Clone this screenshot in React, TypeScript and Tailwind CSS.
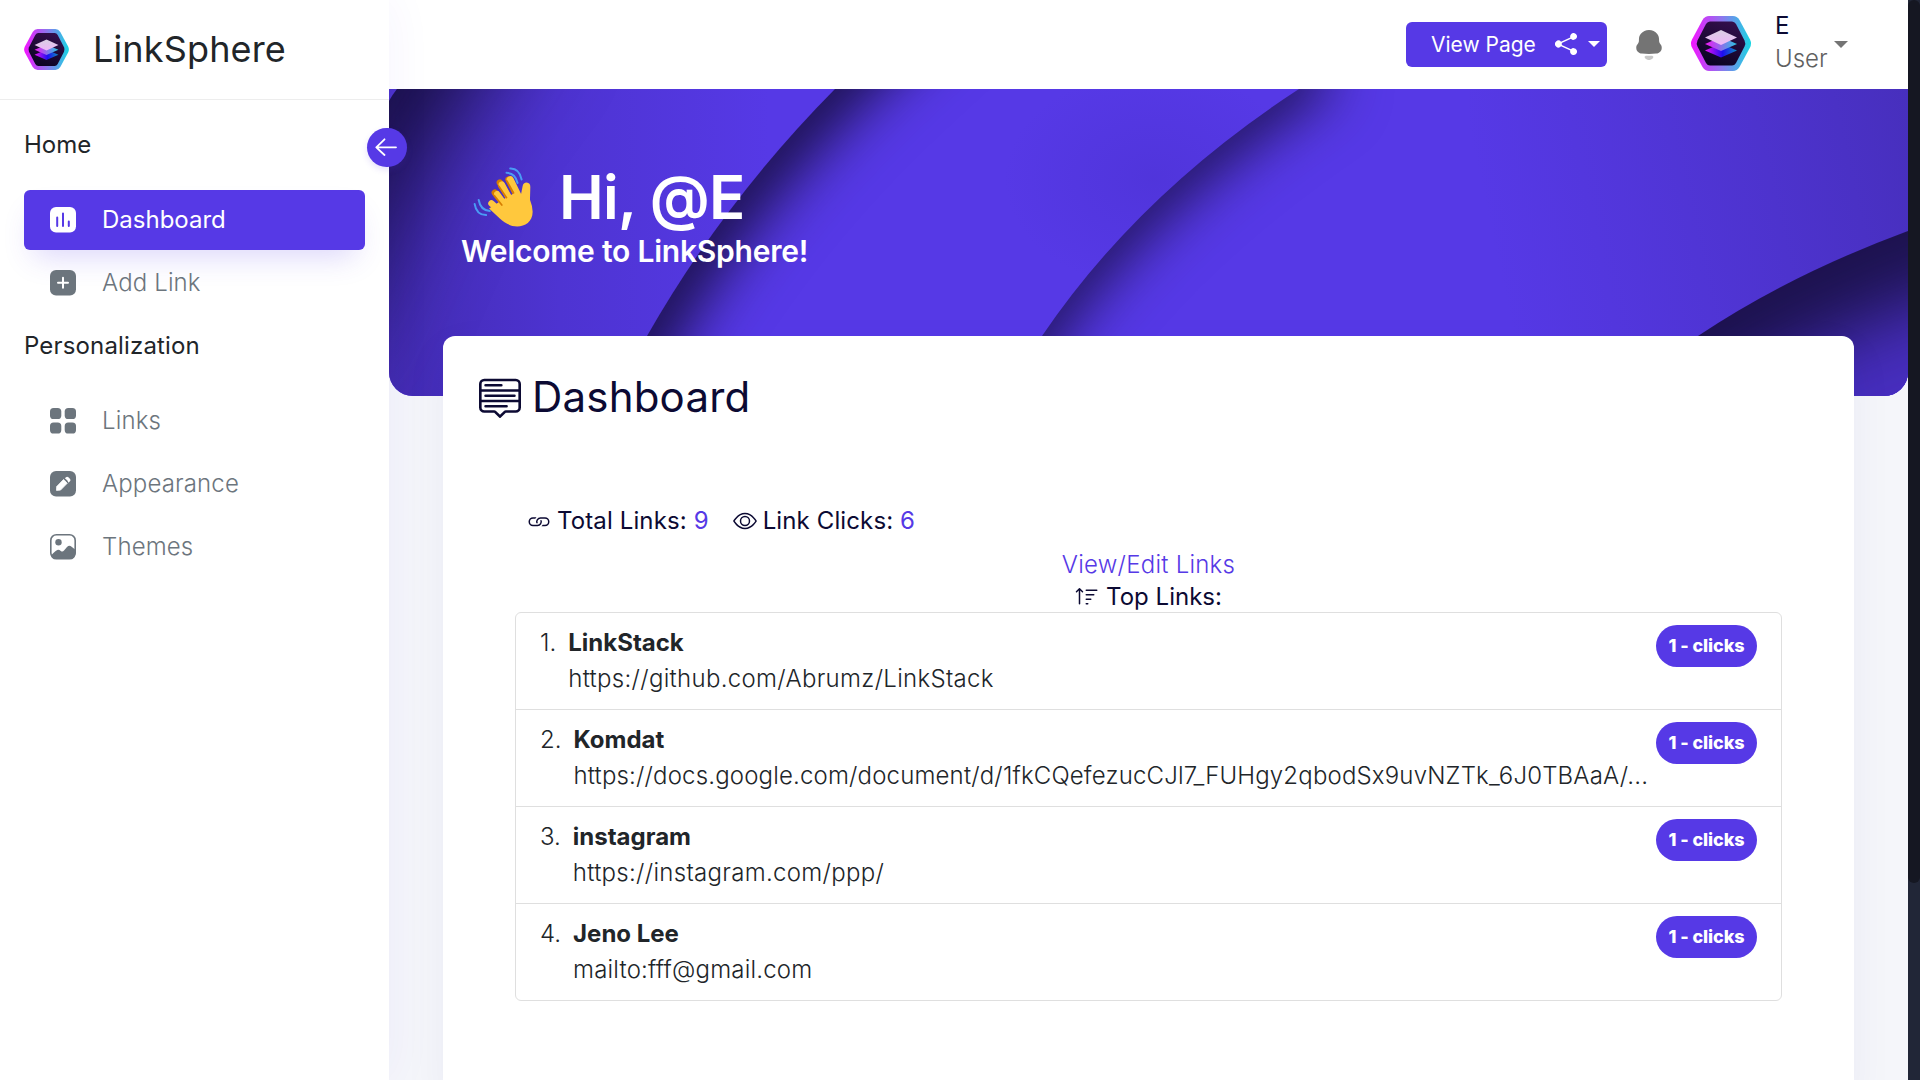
import React, { useId } from "react";
import { BsEye, BsLink, BsMenuUp, BsShareFill, BsSortUp } from "react-icons/bs";

const LINKS = [
  { name: "LinkStack", url: "https://github.com/Abrumz/LinkStack", tracking: "tracking-[0.31px]" },
  { name: "Komdat", url: "https://docs.google.com/document/d/1fkCQefezucCJl7_FUHgy2qbodSx9uvNZTk_6J0TBAaA/...", tracking: "tracking-[0.165px]" },
  { name: "instagram", url: "https://instagram.com/ppp/", tracking: "tracking-[0.3px]" },
  { name: "Jeno Lee", url: "mailto:fff@gmail.com", tracking: "tracking-[0.18px]" },
];

function Logo({ className }: { className: string }) {
  const id = useId();
  return (
    <svg viewBox="0 0 60 55" className={className}>
      <defs>
        <linearGradient id={id + "ring"} x1="0" x2="1" y1="0" y2="0">
          <stop offset="0" stopColor="#f414ff" />
          <stop offset=".5" stopColor="#8f74ee" />
          <stop offset="1" stopColor="#18d6e2" />
        </linearGradient>
        <linearGradient id={id + "core"} x1=".7" x2=".3" y1="0" y2="1">
          <stop offset="0" stopColor="#330f4c" />
          <stop offset="1" stopColor="#0a0322" />
        </linearGradient>
        <linearGradient id={id + "mid"} x1="0" x2="1" y1="0" y2="0">
          <stop offset="0" stopColor="#f414f4" />
          <stop offset="1" stopColor="#27c6e2" />
        </linearGradient>
        <linearGradient id={id + "low"} x1="0" x2="1" y1="0" y2="0">
          <stop offset="0" stopColor="#ee10f4" />
          <stop offset=".55" stopColor="#1d0df0" />
          <stop offset="1" stopColor="#0d8fc0" />
        </linearGradient>
        <linearGradient id={id + "top"} x1="0" x2="0" y1="0" y2="1">
          <stop offset="0" stopColor="#d8cfe2" />
          <stop offset="1" stopColor="#f0b6fa" />
        </linearGradient>
      </defs>
      <path
        d="M18 0H42Q46 0 48.500 4L59 23.500Q61 27.500 59 31.500L48.500 51Q46 55 42 55H18Q14 55 11.500 51L1 31.500Q-1 27.500 1 23.500L11.500 4Q14 0 18 0Z"
        fill={`url(#${id}ring)`}
      />
      <path
        d="M19 5.500H41Q43.500 5.500 45 8L53.500 24.500Q55 27.500 53.500 30.500L45 47Q43.500 49.500 41 49.500H19Q16.500 49.500 15 47L6.500 30.500Q5 27.500 6.500 24.500L15 8Q16.500 5.500 19 5.500Z"
        fill={`url(#${id}core)`}
      />
      <path d="M14 34.500L30 27.500L46 34.500L30 41.500Z" fill={`url(#${id}low)`} />
      <path d="M14 28L30 21L46 28L30 35Z" fill={`url(#${id}mid)`} />
      <path d="M14 21.500L30 14L46 21.500L30 29Z" fill={`url(#${id}top)`} />
    </svg>
  );
}

function WavingHand() {
  return (
    <svg viewBox="36 22 182 184" className="h-[62px] w-[61px]">
      <g fill="none" strokeLinecap="round">
        <g stroke="#4a9bf5" strokeWidth="6">
          <path d="M147 29Q174 28 181 62" />
          <path d="M136 42Q162 42 169 72" />
          <path d="M41 135Q46 167 75 168" />
          <path d="M53 123Q58 153 86 156" />
        </g>
        <g stroke="#d67d00" strokeWidth="19">
          <path d="M142 62L168 112" />
          <path d="M116 71L144 118" />
          <path d="M101 101L130 137" />
        </g>
        <g stroke="#ffc83d">
          <path d="M147 62L174 118" strokeWidth="21" />
          <path d="M122 77L152 132" strokeWidth="19" />
          <path d="M108 105L138 146" strokeWidth="18" />
          <path d="M91 133L132 170" strokeWidth="19" />
        </g>
      </g>
      <path
        d="M184 82Q186 71 196 71Q208 72 207 86L206 122Q214 142 214 158C214 188 191 202 168 202C146 202 130 190 116 178L84 148L128 120L170 96L179 107Z"
        fill="#ffc83d"
      />
      <path d="M137 66L157 102M113 82L136 116M100 110L122 138" stroke="#d67d00" strokeWidth="5" strokeLinecap="round" />
    </svg>
  );
}

function BannerArt() {
  return (
    <svg viewBox="0 0 1519 307" preserveAspectRatio="none" className="absolute inset-0 h-full w-full">
      <defs>
        <filter id="soft50" x="-100%" y="-100%" width="300%" height="300%" colorInterpolationFilters="sRGB"><feGaussianBlur stdDeviation="50" /></filter>
        <filter id="soft40" x="-100%" y="-100%" width="300%" height="300%" colorInterpolationFilters="sRGB"><feGaussianBlur stdDeviation="38" /></filter>
        <filter id="soft30" x="-100%" y="-100%" width="300%" height="300%" colorInterpolationFilters="sRGB"><feGaussianBlur stdDeviation="30" /></filter>
        <linearGradient id="leftFade" x1="0" x2="1" y1="0" y2="0">
          <stop offset="0" stopColor="#432cb2" />
          <stop offset=".45" stopColor="#4e34d2" />
          <stop offset="1" stopColor="#5639e6" />
        </linearGradient>
        <linearGradient id="rightFade" x1="0" x2="1" y1=".15" y2="0">
          <stop offset="0" stopColor="#4a31c5" stopOpacity="0" />
          <stop offset="1" stopColor="#472fbd" />
        </linearGradient>
        <radialGradient id="spot">
          <stop offset="0" stopColor="#4c32d4" />
          <stop offset="1" stopColor="#4c32d4" stopOpacity="0" />
        </radialGradient>
        <clipPath id="bandOne"><path d="M8 0Q4 5 0 12V307H600V0Z" /></clipPath>
        <clipPath id="bandTwo"><path d="M446 0Q335 112 258 247L228 307H1200V0Z" /></clipPath>
        <clipPath id="bandThree"><path d="M910 0Q750 104 653 247L610 307H1519V0Z" /></clipPath>
        <clipPath id="bandFour"><path d="M1519 142Q1400 186 1309 247L1240 307H1519Z" /></clipPath>
      </defs>
      <rect width="1519" height="307" fill="#5639e6" />
      <rect width="380" height="307" fill="url(#leftFade)" />
      <path d="M0 0H8Q4 5 0 12Z" fill="#4c33ca" />
      <g clipPath="url(#bandOne)">
        <path d="M90 -130Q-20 0 -60 100L-130 260" fill="none" stroke="#150d3c" strokeWidth="135" filter="url(#soft50)" />
      </g>
      <g clipPath="url(#bandTwo)">
        <rect x="220" width="720" height="307" fill="#5639e6" />
        <ellipse cx="765" cy="90" rx="150" ry="110" fill="url(#spot)" opacity=".6" />
        <path d="M560 -120Q440 -10 436 -4Q325 108 248 243L170 400" fill="none" stroke="#1a104a" strokeWidth="78" filter="url(#soft30)" />
      </g>
      <g clipPath="url(#bandThree)">
        <rect x="600" width="919" height="307" fill="#5639e6" />
        <rect x="1080" width="439" height="307" fill="url(#rightFade)" />
        <path d="M930 -30Q735 98 638 243L560 380" fill="none" stroke="#1a104a" strokeWidth="56" filter="url(#soft30)" />
      </g>
      <g clipPath="url(#bandFour)">
        <rect x="1200" y="130" width="319" height="177" fill="#472ebf" />
        <path d="M1640 90Q1400 176 1300 240L1180 340" fill="none" stroke="#1c124d" strokeWidth="150" filter="url(#soft40)" />
      </g>
    </svg>
  );
}

const ICONS: Record<string, React.ReactNode> = {
  Dashboard: (
    <>
      <rect width="26" height="25.500" rx="6" fill="currentColor" />
      <path d="M7.200 10.500V19M13 6.500V19M18.800 14.500V19" stroke="#5639e6" strokeWidth="2" strokeLinecap="round" />
    </>
  ),
  "Add Link": (
    <>
      <rect width="26" height="25.500" rx="6" fill="currentColor" />
      <path d="M13 7.800V17.800M8 12.800H18" stroke="#fff" strokeWidth="2" strokeLinecap="round" />
    </>
  ),
  Links: (
    <g fill="currentColor">
      <rect width="11.300" height="11" rx="3.600" />
      <rect x="14.700" width="11.300" height="11" rx="3.600" />
      <rect y="14.500" width="11.300" height="11" rx="3.600" />
      <rect x="14.700" y="14.500" width="11.300" height="11" rx="3.600" />
    </g>
  ),
  Appearance: (
    <>
      <rect width="26" height="25.500" rx="6" fill="currentColor" />
      <path d="M6.500 19.400L6.700 15.600L13.600 8.400L17.200 12.300L10.500 19.100Z" fill="#fff" stroke="#fff" strokeWidth=".8" strokeLinejoin="round" />
      <path d="M14.900 7.200L16 6.200Q17.200 5.300 18.400 6.300L20.100 8Q21 9.200 20 10.300L18.400 11.800L17.400 9.600Z" fill="#fff" />
    </>
  ),
  Themes: (
    <>
      <rect x=".8" y=".8" width="24.400" height="23.900" rx="5.600" fill="none" stroke="currentColor" strokeWidth="1.600" />
      <circle cx="8.500" cy="8.300" r="3.200" fill="currentColor" />
      <path d="M1 21.500Q6.200 15.800 8 15.700Q9.400 15.600 10.800 16.900Q12.500 18.500 14 16.500L17 13Q19.300 10.800 21.600 12.800L25.400 15.800V19.500Q25 25 19.500 25H7Q2 25 1 21.500Z" fill="currentColor" />
    </>
  ),
};

function NavItem({ label, active }: { label: string; active?: boolean }) {
  return (
    <a
      className={
        "flex h-[60px] w-[341px] items-center rounded-md pl-[26px] text-2xl " +
        (active
          ? "bg-[#5639e6] text-white shadow-[0_16px_30px_-10px_rgba(86,57,230,0.22)]"
          : "font-light tracking-[0.13px] text-[#6c757d]")
      }
    >
      <svg viewBox="0 0 26 25.5" className="h-[25.5px] w-[26px] shrink-0">{ICONS[label]}</svg>
      <span className="-mt-px pl-[26px]">{label}</span>
    </a>
  );
}

export default function App() {
  return (
    <div className="flex h-[1080px] w-[1920px] overflow-hidden bg-[#f5f6fa] font-['Inter',sans-serif] text-2xl leading-9 text-[#212529]">
      <aside className="relative z-10 flex w-[389px] shrink-0 flex-col bg-white shadow-[0_0_45px_rgba(86,57,230,0.06)]">
        <div className="flex h-[100px] items-center border-b border-[#ededed] pl-6">
          <Logo className="h-[41px] w-[45px]" />
          <span className="-mt-0.5 pl-6 text-[36px] tracking-[0.15px]">LinkSphere</span>
        </div>
        <div className="px-6 pt-[27px]">
          <p>Home</p>
          <nav className="flex flex-col gap-[3px] pt-[27px]">
            <NavItem label="Dashboard" active />
            <NavItem label="Add Link" />
          </nav>
          <p className="pt-[15px] tracking-[0.16px]">Personalization</p>
          <nav className="flex flex-col gap-[3px] pt-[27px]">
            <NavItem label="Links" />
            <NavItem label="Appearance" />
            <NavItem label="Themes" />
          </nav>
        </div>
        <button className="absolute top-[128px] left-[367px] flex h-[39px] w-10 items-center justify-center rounded-full bg-[#5639e6] shadow-[0_3px_6px_rgba(86,57,230,0.15)]">
          <svg viewBox="0 0 22 18" className="-mt-px mr-0.5 h-[18px] w-[22px]" fill="none" stroke="#fff" strokeWidth="1.800" strokeLinecap="round" strokeLinejoin="round">
            <path d="M21 9.300H1.300M9.500 1.300L1.300 9.300L9.500 17" />
          </svg>
        </button>
      </aside>

      <main className="flex w-[1519px] shrink-0 flex-col">
        <header className="flex h-[89px] shrink-0 items-start bg-white pl-[1017px]">
          <button className="mt-[22px] flex h-[45px] w-[201px] items-center rounded-md bg-[#5639e6] pl-[25px] text-white">
            <span className="mt-px w-[124px] text-left text-[21px] whitespace-nowrap">View Page</span>
            <BsShareFill className="-mt-0.5 h-[22px] w-[22px]" />
            <svg viewBox="0 0 12 6" className="-mt-0.5 ml-[11px] h-1.5 w-3"><path d="M0 0H12L6 6Z" fill="#fff" /></svg>
          </button>
          <svg viewBox="0 0 24 24" className="mt-[27px] ml-6 h-9 w-9" fill="#747474">
            <path d="M19.7695 11.6453C19.039 10.7923 18.7071 10.0531 18.7071 8.79716V8.37013C18.7071 6.73354 18.3304 5.67907 17.5115 4.62459C16.2493 2.98699 14.1244 2 12.0442 2H11.9558C9.91935 2 7.86106 2.94167 6.577 4.5128C5.71333 5.58842 5.29293 6.68822 5.29293 8.37013V8.79716C5.29293 10.0531 4.98284 10.7923 4.23049 11.6453C3.67691 12.2738 3.5 13.0815 3.5 13.9557C3.5 14.8309 3.78723 15.6598 4.36367 16.3336C5.11602 17.1413 6.17846 17.6569 7.26375 17.7466C8.83505 17.9258 10.4063 17.9933 12.0005 17.9933C13.5937 17.9933 15.165 17.8805 16.7372 17.7466C17.8215 17.6569 18.884 17.1413 19.6363 16.3336C20.2118 15.6598 20.5 14.8309 20.5 13.9557C20.5 13.0815 20.3231 12.2738 19.7695 11.6453Z" />
            <path
              opacity=".4"
              d="M14.0088 19.2283C13.5088 19.1215 10.4627 19.1215 9.96275 19.2283C9.53539 19.327 9.07324 19.5566 9.07324 20.0602C9.09809 20.5406 9.37935 20.9646 9.76895 21.2335C10.2718 21.6273 10.8632 21.877 11.4824 21.9667C11.8123 22.012 12.1482 22.01 12.4901 21.9667C13.1083 21.877 13.6997 21.6273 14.2036 21.2345C14.5922 20.9646 14.8734 20.5406 14.8983 20.0602C14.8983 19.5566 14.4361 19.327 14.0088 19.2283Z"
            />
          </svg>
          <Logo className="mt-4 ml-6 h-[55px] w-[60px]" />
          <div className="ml-6 flex w-[59px] flex-col pt-[9px] leading-[33px]">
            <span className="text-[#0c0a33]">E</span>
            <span className="font-light text-[#606060]">User</span>
          </div>
          <svg viewBox="0 0 14 7" className="mt-[41px] h-[7px] w-3.5"><path d="M0 0H14L7 7Z" fill="#747474" /></svg>
        </header>

        <section className="relative h-[307px] shrink-0 overflow-hidden rounded-b-3xl">
          <BannerArt />
          <div className="relative pt-[72px] pl-[72px] font-semibold text-white">
            <h1 className="flex h-[72px] items-center text-[60px] leading-[72px] tracking-[-0.7px]">
              <span className="w-[98px] pl-3"><WavingHand /></span>
              Hi, @E
            </h1>
            <p className="text-[30px] leading-9 tracking-[-0.22px]">Welcome to LinkSphere!</p>
          </div>
        </section>

        <section className="relative -mt-[60px] ml-[54px] h-[760px] w-[1411px] shrink-0 rounded-t-xl bg-white shadow-[0_15px_45px_rgba(17,38,146,0.05)]">
          <h2 className="flex items-center pt-9 pl-9 text-[42px] leading-[50px] tracking-[0.2px] text-[#0c0a33]">
            <BsMenuUp className="h-[42px] w-[42px]" />
            <span className="pl-[11px]">Dashboard</span>
          </h2>
          <div className="flex items-center pt-[81px] pl-[84px] tracking-[0.12px] whitespace-pre text-[#0c0a33]">
            <BsLink className="mr-1.5 h-6 w-6" />
            <span>Total Links: <span className="text-[#5639e6]">9</span></span>
            <BsEye className="mr-1.5 ml-6 h-6 w-6" />
            <span>Link Clicks: <span className="text-[#5639e6]">6</span></span>
          </div>
          <div className="flex flex-col items-center pt-2 pb-px">
            <a className="font-light leading-9 tracking-[0.24px] text-[#5639e6]">View/Edit Links</a>
            <p className="flex items-center leading-7 text-[#0c0a33]">
              <BsSortUp className="mr-[7px] h-6 w-6" />
              Top Links:
            </p>
          </div>
          <ol className="ml-[72px] w-[1267px] divide-y divide-[#dfdfdf] rounded-md border border-[#dfdfdf]">
            {LINKS.map((l, i) => (
              <li key={l.name} className="flex h-[97px] items-start py-3 pr-6 pl-6 last:h-24">
                <span className="pr-3 font-light">{i + 1}.</span>
                <div className="w-0 flex-1">
                  <p className="font-bold">{l.name}</p>
                  <p className={"font-light whitespace-nowrap " + l.tracking}>{l.url}</p>
                </div>
                <span className="flex h-[42px] w-[101px] items-center justify-center rounded-full bg-[#5639e6] text-lg font-extrabold tracking-[-0.1px] whitespace-nowrap text-white">1 - clicks</span>
              </li>
            ))}
          </ol>
        </section>
      </main>

      <div className="w-3 shrink-0 bg-[#212637]">
        <div className="h-[883px] rounded-full bg-[#151722]" />
      </div>
    </div>
  );
}
